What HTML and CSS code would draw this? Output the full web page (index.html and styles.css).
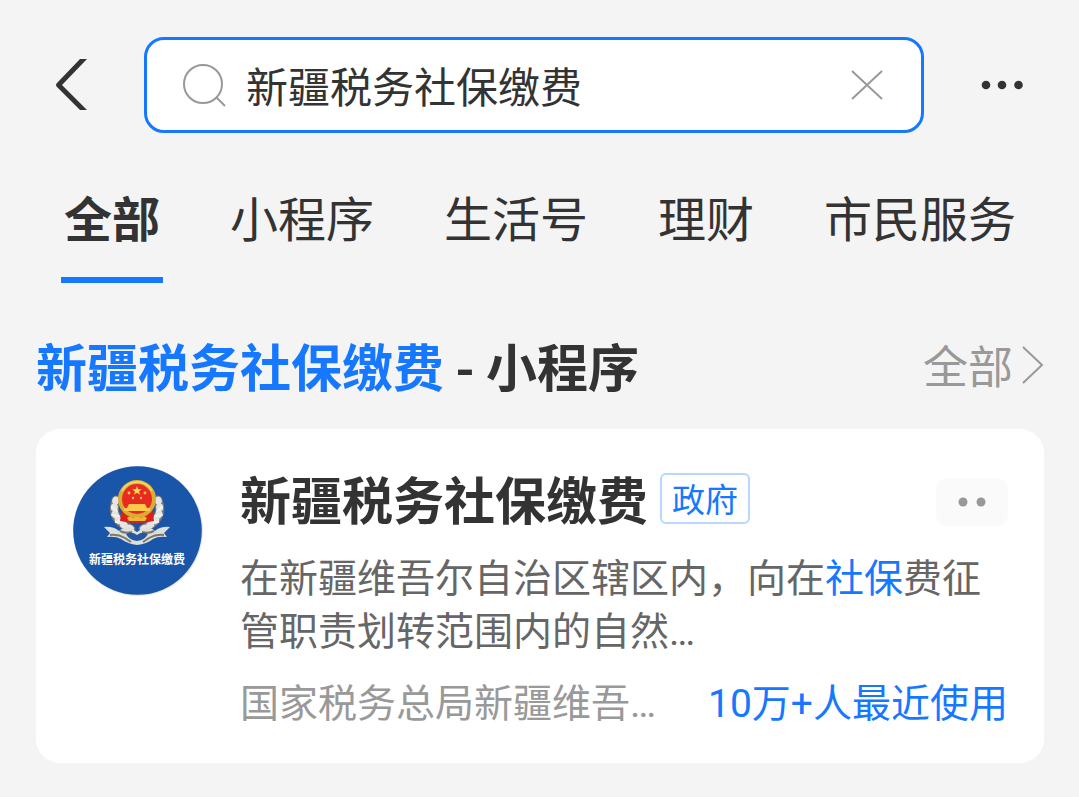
FILE: index.html
```html
<!DOCTYPE html>
<html lang="zh-CN">
<head>
<meta charset="utf-8">
<meta name="viewport" content="width=device-width, initial-scale=1">
<title>新疆税务社保缴费</title>
<link rel="stylesheet" href="styles.css">
</head>
<body>
<header class="topbar">
  <button class="icon-button" type="button" aria-label="返回">
    <svg width="36" height="54" viewBox="0 0 36 54"><path d="M26 1h7L8 27l25 25h-7L3 29q-2-2 0-4z" fill="#333"/></svg>
  </button>
  <form class="search" role="search">
    <svg width="45" height="45" viewBox="0 0 45 45" fill="none" stroke="#999" stroke-width="2"><circle cx="21" cy="21" r="19"/><path d="M34 34l9 9"/></svg>
    <input class="search-input" type="text" aria-label="搜索" value="新疆税务社保缴费">
    <button class="icon-button" type="button" aria-label="清除">
      <svg width="32" height="30" viewBox="0 0 32 30" stroke="#999" stroke-width="2"><path d="M1 1l30 28M31 1L1 29"/></svg>
    </button>
  </form>
  <button class="icon-button" type="button" aria-label="更多">
    <svg width="47" height="10" viewBox="0 0 47 10" fill="#333"><circle cx="8" cy="5" r="4.300"/><circle cx="24" cy="5" r="4.300"/><circle cx="40.500" cy="5" r="4.300"/></svg>
  </button>
</header>
<nav class="tabs">
  <a class="tab tab-active" href="#all">全部</a>
  <a class="tab" href="#mini">小程序</a>
  <a class="tab" href="#life">生活号</a>
  <a class="tab" href="#finance">理财</a>
  <a class="tab" href="#civic">市民服务</a>
</nav>
<main class="results">
  <div class="section-head">
    <h1 class="section-title"><span class="highlight">新疆税务社保缴费</span> - 小程序</h1>
    <a class="section-more" href="#more">全部
      <svg width="22" height="38" viewBox="0 0 22 38" fill="none" stroke="#999" stroke-width="2"><path d="M1 1l19 18L1 37"/></svg>
    </a>
  </div>
  <article class="card">
    <svg class="avatar" viewBox="0 0 130 130" role="img" aria-label="新疆税务社保缴费">
      <circle cx="65" cy="65" r="65" fill="#e6e9ef"/>
      <circle cx="64.500" cy="64.500" r="64.300" fill="#1955a8"/>
      <g fill="none" stroke-linecap="round">
        <path d="M43 34q-7 19 15 29M85 34q7 19-15 29" stroke="#777" stroke-width="9"/>
        <path d="M43 34q-7 19 15 29M85 34q7 19-15 29" stroke="#e4e4e2" stroke-width="7" stroke-dasharray="1 6"/>
        <path d="M39 41l5 4M39 49l7 1M43 56l7-1M89 41l-5 4M89 49l-7 1M85 56l-7-1" stroke="#f2f2f0" stroke-width="2"/>
      </g>
      <path d="M49 42h30l2 13q-17 4-34 0z" fill="#dc2018"/>
      <circle cx="64" cy="33" r="17" fill="#e92a20" stroke="#d9ac35" stroke-width="4"/>
      <path d="M49 25a17 17 0 0 1 30 0" fill="none" stroke="#f2d568" stroke-width="2"/>
      <path d="M64 20l1.300 3.300h3.500l-2.800 2.100 1.100 3.400-3.100-2-3.100 2 1.100-3.400-2.800-2.100h3.500z" fill="#ffd84f"/>
      <g fill="#ffc94b"><circle cx="56" cy="27" r="1.400"/><circle cx="72" cy="27" r="1.400"/><circle cx="60" cy="32" r="1.200"/><circle cx="68" cy="32" r="1.200"/><path d="M56 38h16l2 4h3v3H51v-3h3z"/></g>
      <path d="M54 52q3-3 6 0 4-3 8 0 3-3 6 0l-2 3H56z" fill="#f5b52e"/>
      <path d="M31 61q9-1 15 4 6-6 13-2l5 3 5-3q7-4 13 2 6-5 15-4l-6 6 3 4q-9-1-14 2-6 5-16 6-9-1-16-6-5-3-14-2l3-4z" fill="#dededb"/>
      <path d="M37 69q8-1 15 3l6 4M91 69q-8-1-15 3l-6 4M47 65q6 3 12 1M81 65q-6 3-12 1" fill="none" stroke="#78786e" stroke-width="2"/>
      <path d="M53 68q6-3 11 1 5-4 11-1-3 6-11 7-8-1-11-7z" fill="#2459a0"/>
      <text class="avatar-text" x="64" y="98" text-anchor="middle">新疆税务社保缴费</text>
    </svg>
    <div class="card-body">
      <div class="card-head">
        <h2 class="card-title">新疆税务社保缴费</h2>
        <span class="tag">政府</span>
        <button class="card-menu" type="button" aria-label="更多操作">
          <svg width="28" height="10" viewBox="0 0 28 10" fill="#999"><circle cx="5" cy="5" r="4.500"/><circle cx="23" cy="5" r="4.500"/></svg>
        </button>
      </div>
      <p class="description">在新疆维吾尔自治区辖区内，向在<span class="highlight">社保</span>费征管职责划转范围内的自然…</p>
      <div class="card-foot">
        <span class="source">国家税务总局新疆维吾…</span>
        <span class="highlight">10万+人最近使用</span>
      </div>
    </div>
  </article>
</main>
</body>
</html>
```
FILE: styles.css
```css
* {
  box-sizing: border-box;
}

body {
  margin: 0;
  background: #f4f4f4;
  color: #333;
  font-family: Roboto, "Noto Sans CJK SC", sans-serif;
}

a {
  color: inherit;
  text-decoration: none;
}

svg {
  display: block;
  flex: none;
}

h1,
h2,
p {
  margin: 0;
}

.topbar {
  display: flex;
  align-items: center;
  gap: 54px;
  padding: 37px 54px 0;
}

.icon-button {
  flex: none;
  padding: 0;
  border: 0;
  background: none;
}

.search {
  display: flex;
  flex: 1;
  align-items: center;
  height: 96px;
  padding: 0 38px 0 35px;
  border: 3px solid #1677ff;
  border-radius: 20px;
  background: #fff;
}

.search-input {
  flex: 1;
  min-width: 0;
  height: 60px;
  padding: 0 19px;
  border: 0;
  outline: 0;
  background: none;
  color: #333;
  font: 42px/60px "Noto Sans CJK SC", sans-serif;
}

.tabs {
  display: flex;
  gap: 64px;
  padding: 48px 0 0 61px;
  overflow: hidden;
}

.tab {
  flex: none;
  padding: 0 3px 16px;
  border-bottom: 6px solid transparent;
  font-size: 48px;
  line-height: 80px;
}

.tab-active {
  border-color: #1677ff;
  font-weight: 700;
}

.results {
  padding: 45px 35px 34px 36px;
}

.section-head {
  display: flex;
  align-items: center;
  justify-content: space-between;
  margin-bottom: 27px;
  font-family: "Noto Sans CJK SC", sans-serif;
}

.section-title,
.card-title {
  font-size: 51px;
  font-weight: 700;
  line-height: 74px;
}

.card-title {
  padding-top: 2px;
}

.highlight {
  color: #1677ff;
}

.section-more {
  display: flex;
  align-items: center;
  gap: 9px;
  color: #999;
  font-size: 45px;
  line-height: 74px;
}

.card {
  display: flex;
  gap: 37px;
  padding: 37px 36px 32px 37px;
  border-radius: 24px;
  background: #fff;
}

.avatar {
  width: 130px;
  height: 130px;
}

.avatar-text {
  fill: #fff;
  font-size: 12px;
  font-weight: 700;
}

.card-body {
  flex: 1;
  min-width: 0;
}

.card-head {
  display: flex;
  align-items: center;
  height: 72px;
  margin-bottom: 15px;
}

.tag {
  margin: 0 0 8px 12px;
  padding: 0 10px;
  border: 2px solid #b9d6ff;
  border-radius: 6px;
  color: #1677ff;
  font-family: "Noto Sans CJK SC", sans-serif;
  font-size: 33px;
  line-height: 47px;
}

.card-menu {
  display: flex;
  align-items: center;
  justify-content: center;
  width: 72px;
  height: 48px;
  margin-left: auto;
  padding: 0;
  border: 0;
  border-radius: 12px;
  background: #fafafa;
}

.description {
  color: #666;
  font-size: 39px;
  line-height: 53px;
}

.card-foot {
  display: flex;
  justify-content: space-between;
  margin-top: 19px;
  font-size: 39px;
  line-height: 53px;
}

.source {
  color: #999;
}
```
